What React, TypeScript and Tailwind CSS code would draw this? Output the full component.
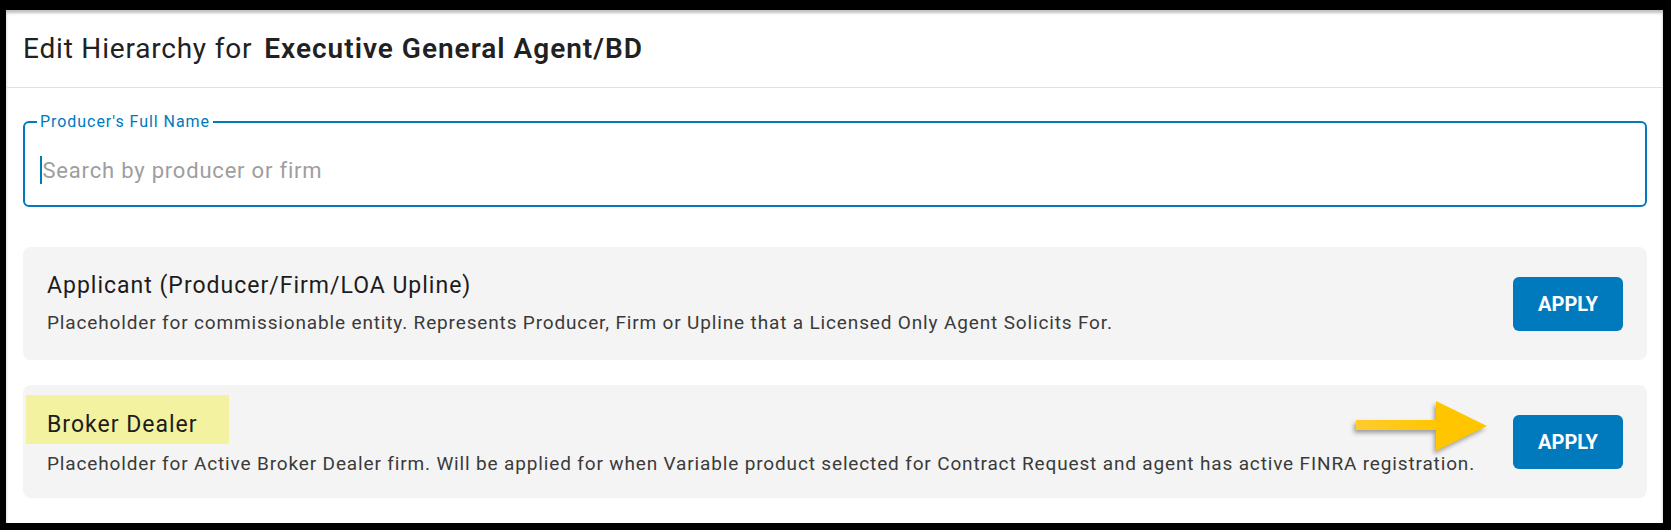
import React from "react";

const font = { fontFamily: "Roboto, 'Noto Sans', sans-serif" };

function Arrow() {
  return (
    <svg
      width="140"
      height="60"
      viewBox="0 0 140 60"
      className="absolute right-[154px] top-[12px]"
      style={{ filter: "drop-shadow(-2px 3px 2px rgba(0,0,0,0.35))" }}
    >
      <defs>
        <linearGradient id="shaft" x1="0" x2="1" y1="0" y2="0">
          <stop offset="0" stopColor="#FFCB2E" />
          <stop offset="1" stopColor="#FFC600" />
        </linearGradient>
      </defs>
      <rect x="3" y="23" width="82" height="10" fill="url(#shaft)" />
      <polygon points="83,4 134,29 83,54" fill="#FFC600" />
    </svg>
  );
}

function HierarchyCard({
  title,
  description,
  highlight,
  children,
}: {
  title: string;
  description: string;
  highlight?: boolean;
  children?: React.ReactNode;
}) {
  return (
    <div className="relative flex h-[113px] items-center justify-between rounded-lg bg-[#f4f4f4] px-6">
      {highlight ? (
        <div className="flex flex-col self-start pt-[10px]">
          <div className="-ml-[21px] flex h-[49px] w-[203px] items-center bg-[#F2F2A0] pl-[21px] pt-[11px] text-[23px] tracking-[1px] text-[#1c1c1c]">
            {title}
          </div>
          <p className="mt-[6px] text-[19px] leading-[27px] tracking-[0.85px] text-[#3a3a3a]">{description}</p>
        </div>
      ) : (
        <div className="flex flex-col self-start pt-[24px]">
          <div className="text-[23px] leading-[30px] tracking-[1px] text-[#1c1c1c]">{title}</div>
          <p className="mt-[8px] text-[19px] leading-[27px] tracking-[0.85px] text-[#3a3a3a]">{description}</p>
        </div>
      )}
      {children}
      <button className="flex h-[54px] w-[110px] items-center justify-center rounded-[6px] bg-[#0079BD] text-[20px] font-bold text-white">
        APPLY
      </button>
    </div>
  );
}

export default function App() {
  return (
    <div className="h-[530px] w-[1671px] bg-black pl-[6px] pr-[8px] pt-[10px] pb-[7px]" style={font}>
      <div className="flex h-full flex-col bg-white shadow-[inset_0_3px_3px_rgba(0,0,0,0.25)]">
        <div className="flex h-[78px] items-center border-b border-[#e0e0e0] pl-[17px] text-[28px] tracking-[0.8px] text-[#212121]">
          <span>Edit Hierarchy for</span>
          <span className="ml-[12px] font-semibold tracking-[1px]">Executive General Agent/BD</span>
        </div>

        <div className="flex flex-col px-[17px] pr-[16px]">
          <div className="relative mt-[33px] h-[86px] rounded-[6px] border-2 border-[#0079BD]">
            <span className="absolute -top-[13px] left-[12px] bg-white px-[3px] text-[16px] tracking-[0.95px] text-[#0079BD]">
              Producer&apos;s Full Name
            </span>
            <div className="flex h-full items-center pl-[15px] pt-[12px]">
              <span className="mr-[1px] h-[28px] w-[1.5px] bg-[#0079BD]"></span>
              <span className="text-[22px] tracking-[0.8px] text-[#9e9e9e]">Search by producer or firm</span>
            </div>
          </div>

          <div className="mt-[40px] flex flex-col gap-[25px]">
            <HierarchyCard
              title="Applicant (Producer/Firm/LOA Upline)"
              description="Placeholder for commissionable entity. Represents Producer, Firm or Upline that a Licensed Only Agent Solicits For."
            />
            <HierarchyCard
              highlight
              title="Broker Dealer"
              description="Placeholder for Active Broker Dealer firm. Will be applied for when Variable product selected for Contract Request and agent has active FINRA registration."
            >
              <Arrow />
            </HierarchyCard>
          </div>
        </div>
      </div>
    </div>
  );
}
